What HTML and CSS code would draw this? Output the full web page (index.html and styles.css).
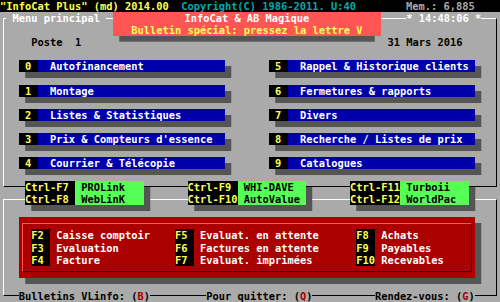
FILE: index.html
```
<!DOCTYPE html>
<html lang="fr">
<head>
    <meta charset="UTF-8">
    <title>InfoCat Plus</title>
    <link rel="stylesheet" href="styles.css">
</head>
<body>

    <div class="screen">
        <!-- barre du haut -->
        <div class="topbar"><span class="yellow">"InfoCat Plus" (md) 2014.00</span>  <span class="cyan">Copyright(C) 1986-2011. U:40</span>        <span class="dim">Mem.: 6,885</span></div>

        <!-- cadres -->
        <div class="frame frame-top"></div>
        <div class="frame frame-bottom"></div>

        <div class="title"> Menu principal </div>

        <div class="notice">
            <div class="notice-title">InfoCat &amp; AB Magique</div>
            <div class="notice-text">Bulletin spécial: pressez la lettre V</div>
        </div>

        <div class="clock">* 14:48:06 *</div>

        <div class="poste">Poste  1</div>
        <div class="date">31 Mars 2016</div>

        <!-- menu principal -->
        <div class="menu">
            <div class="item"><span class="key">0</span><span class="label">Autofinancement</span></div>
            <div class="item"><span class="key">1</span><span class="label">Montage</span></div>
            <div class="item"><span class="key">2</span><span class="label">Listes &amp; Statistiques</span></div>
            <div class="item"><span class="key">3</span><span class="label">Prix &amp; Compteurs d'essence</span></div>
            <div class="item"><span class="key">4</span><span class="label">Courrier &amp; Télécopie</span></div>
            <div class="item"><span class="key">5</span><span class="label">Rappel &amp; Historique clients</span></div>
            <div class="item"><span class="key">6</span><span class="label">Fermetures &amp; rapports</span></div>
            <div class="item"><span class="key">7</span><span class="label">Divers</span></div>
            <div class="item"><span class="key">8</span><span class="label">Recherche / Listes de prix</span></div>
            <div class="item"><span class="key">9</span><span class="label">Catalogues</span></div>
        </div>

        <!-- raccourcis Ctrl -->
        <div class="ctrls">
            <div class="ctrl">
                <div class="keys"><div>Ctrl-F7</div><div>Ctrl-F8</div></div>
                <div class="names"><div>PROLink</div><div>WebLinK</div></div>
            </div>
            <div class="ctrl">
                <div class="keys"><div>Ctrl-F9</div><div>Ctrl-F10</div></div>
                <div class="names"><div>WHI-DAVE</div><div>AutoValue</div></div>
            </div>
            <div class="ctrl">
                <div class="keys"><div>Ctrl-F11</div><div>Ctrl-F12</div></div>
                <div class="names"><div>Turboii</div><div>WorldPac</div></div>
            </div>
        </div>

        <!-- touches de fonction -->
        <div class="panel">
            <div class="panel-frame">
                <div class="fkeys">
                    <div class="frow"><span class="fkey">F2</span><span class="fname">Caisse comptoir</span></div>
                    <div class="frow"><span class="fkey">F3</span><span class="fname">Evaluation</span></div>
                    <div class="frow"><span class="fkey">F4</span><span class="fname">Facture</span></div>
                    <div class="frow"><span class="fkey">F5</span><span class="fname">Evaluat. en attente</span></div>
                    <div class="frow"><span class="fkey">F6</span><span class="fname">Factures en attente</span></div>
                    <div class="frow"><span class="fkey">F7</span><span class="fname">Evaluat. imprimées</span></div>
                    <div class="frow"><span class="fkey">F8</span><span class="fname">Achats</span></div>
                    <div class="frow"><span class="fkey">F9</span><span class="fname">Payables</span></div>
                    <div class="frow"><span class="fkey">F10</span><span class="fname">Recevables</span></div>
                </div>
            </div>
        </div>

        <!-- ligne du bas -->
        <div class="status">
            <span class="status-item">Bulletins VLinfo: (<span class="hot">B</span>)</span>
            <span class="status-item quit">Pour quitter: (<span class="hot">Q</span>)</span>
            <span class="status-item rdv">Rendez-vous: (<span class="hot">G</span>)</span>
        </div>
    </div>

</body>
</html>
```

FILE: styles.css
```
body {
    margin: 0;
    background-color: #aaaaaa;
    font-family: "DejaVu Sans Mono", "Liberation Mono", monospace;
    font-weight: bold;
    font-size: 10.381px;
    line-height: 12.08px;
}

/* ecran texte 80 x 25 */
.screen {
    display: grid;
    grid-template-columns: repeat(80, 6.25px);
    grid-template-rows: repeat(25, 1fr);
    width: 500px;
    height: 302px;
    overflow: hidden;
}

.topbar {
    grid-column: 1 / -1;
    grid-row: 1;
    background-color: #000;
    white-space: pre;
}

.yellow { color: #ffff55; }
.cyan { color: #00aaaa; }
.dim { color: #aaaaaa; }

.frame {
    grid-column: 1 / -1;
    margin: 6px 3px;
    border: 1px solid;
    border-color: #fff #000 #000 #fff;
}

.frame-top { grid-row: 2 / 17; }
.frame-bottom { grid-row: 17 / 26; }

.title {
    grid-column: 2 / span 16;
    grid-row: 2;
    color: #fff;
    background-color: #aaaaaa;
    white-space: pre;
}

.notice {
    grid-column: 19 / span 43;
    grid-row: 2 / span 2;
    background-color: #ff5555;
    text-align: center;
    white-space: nowrap;
    box-shadow: 0 12px 0 -6.25px #555;
}

.notice-title { color: #fff; }
.notice-text { color: #ffff55; }

.clock {
    grid-column: 66 / span 12;
    grid-row: 2;
    color: #fff;
    background-color: #aaaaaa;
    white-space: pre;
}

.poste {
    grid-column: 6 / span 8;
    grid-row: 4;
    color: #000;
    white-space: pre;
}

.date {
    grid-column: 63 / span 12;
    grid-row: 4;
    color: #000;
}

/* menu */
.menu {
    grid-column: 4 / span 73;
    grid-row: 6 / span 9;
    display: grid;
    grid-template-columns: repeat(2, 206.25px);
    grid-template-rows: repeat(5, 12.08px);
    grid-auto-flow: column;
    column-gap: 43.75px;
    row-gap: 12.08px;
}

.item {
    display: flex;
    box-shadow: 6.25px 6px 0 #555;
}

.item .key {
    width: 18.75px;
    background-color: #000;
    color: #ffff55;
    text-align: center;
}

.item .label {
    flex: 1;
    background-color: #0000aa;
    color: #fff;
    padding-left: 12.5px;
    white-space: pre;
}

/* raccourcis */
.ctrls {
    grid-column: 5 / span 71;
    grid-row: 16 / span 2;
    display: flex;
    gap: 43.75px;
}

.ctrl {
    display: flex;
    width: 118.75px;
    box-shadow: 6.25px 6px 0 #555;
}

.ctrl .keys {
    width: 50px;
    background-color: #000;
    color: #ffff55;
}

.ctrl .names {
    flex: 1;
    background-color: #55ff55;
    color: #000;
    padding-left: 6.25px;
}

/* panneau rouge */
.panel {
    grid-column: 4 / span 73;
    grid-row: 19 / span 5;
    display: flex;
    background-color: #aa0000;
    box-shadow: 6.25px 6px 0 #555;
}

.panel-frame {
    flex: 1;
    margin: 6px 3px;
    border: 1px solid;
    border-color: #ff5555 #000 #000 #ff5555;
    padding: 5px 0 0 8.5px;
}

.fkeys {
    display: grid;
    grid-template-columns: 143.75px 181.25px auto;
    grid-template-rows: repeat(3, 12.08px);
    grid-auto-flow: column;
}

.frow { display: flex; }

.fkey {
    width: 18.75px;
    background-color: #000;
    color: #ffff55;
}

.fname {
    margin-left: 6.25px;
    color: #fff;
    white-space: pre;
}

/* ligne du bas */
.status {
    grid-column: 4 / span 73;
    grid-row: 25;
    display: flex;
}

.status-item {
    background-color: #aaaaaa;
    color: #000;
    white-space: pre;
}

.status-item.quit { margin-left: 56.25px; }
.status-item.rdv { margin-left: 62.5px; }

.hot { color: #aa0000; }
```
